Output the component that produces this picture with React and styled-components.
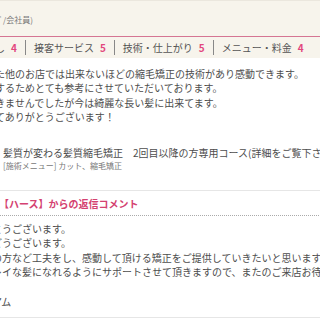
import styled, { createGlobalStyle } from 'styled-components';

const Global = createGlobalStyle`
  html, body {
    margin: 0;
    padding: 0;
    background: #fff;
    overflow: hidden;
  }
  body {
    font-family: "Noto Sans CJK JP", "Noto Sans", sans-serif;
    color: #4d4d4d;
  }
`;

const Page = styled.div`
  width: 340px;
  margin-left: -5px;
  overflow: hidden;
`;

const Head = styled.div`
  background: #f7f4ec;
  border-top: 1px solid #ebe7de;
`;

const Reviewer = styled.div`
  height: 34px;
  display: flex;
  align-items: center;
  padding-top: 1px;
  font-size: 8px;
  color: #777;
`;

const Ratings = styled.div`
  border-top: 1px solid #d57593;
  height: 21px;
  display: flex;
  align-items: center;
  font-size: 10px;
  color: #555;
  white-space: nowrap;
`;

const Item = styled.span`
  display: flex;
  align-items: center;
`;

const Score = styled.b`
  color: #e2477d;
  margin-left: 6px;
  font-size: 10px;
`;

const Sep = styled.span`
  width: 1px;
  height: 15px;
  background: #888;
  margin: 0 8px 0 8px;
`;

const Body = styled.div`
  padding-top: 9px;
  font-size: 10px;
  line-height: 14.4px;
  white-space: nowrap;
`;

const Para = styled.p`
  margin: 0;
`;

const Menu = styled.div`
  margin-top: 21px;
  padding-left: 8px;
  padding-bottom: 19px;
  border-bottom: 1px solid #e6e6e6;
`;

const MenuTitle = styled.div`
  font-size: 10px;
  line-height: 14px;
`;

const MenuSub = styled.div`
  font-size: 8px;
  line-height: 11px;
  color: #777;
`;

const ReplyHead = styled.div`
  padding-top: 4px;
  height: 20px;
  display: flex;
  align-items: center;
  font-size: 10px;
  font-weight: bold;
  color: #d44271;
  border-bottom: 1px dotted #aaa;
  padding-left: 4px;
`;

const Reply = styled.div`
  margin-left: -3px;
  padding-top: 6px;
  padding-bottom: 8px;
  border-bottom: 1px solid #e6e6e6;
  font-size: 10px;
  line-height: 14.6px;
`;

export default function App() {
  return (
    <>
      <Global />
      <Page>
        <Head>
          <Reviewer>ﾀﾞ/会社員)</Reviewer>
          <Ratings>
            <Item>し<Score>4</Score></Item>
            <Sep />
            <Item>接客サービス<Score>5</Score></Item>
            <Sep />
            <Item>技術・仕上がり<Score>5</Score></Item>
            <Sep />
            <Item>メニュー・料金<Score>4</Score></Item>
          </Ratings>
        </Head>
        <Body>
          <Para>た他のお店では出来ないほどの縮毛矯正の技術があり感動できます。</Para>
          <Para>するためとても参考にさせていただいております。</Para>
          <Para>きませんでしたが今は綺麗な長い髪に出来てます。</Para>
          <Para>てありがとうございます！</Para>
          <Menu>
            <MenuTitle>髪質が変わる髪質縮毛矯正　2回目以降の方専用コース(詳細をご覧下さい)</MenuTitle>
            <MenuSub>[施術メニュー] カット、縮毛矯正</MenuSub>
          </Menu>
          <ReplyHead>【ハース】からの返信コメント</ReplyHead>
          <Reply>
            <Para>とうございます。</Para>
            <Para>どうございます。</Para>
            <Para>の方など工夫をし、感動して頂ける矯正をご提供していきたいと思います。</Para>
            <Para>レイな髪になれるようにサポートさせて頂きますので、またのご来店お待ちしております。</Para>
            <Para>&nbsp;</Para>
            <Para>アム</Para>
          </Reply>
        </Body>
      </Page>
    </>
  );
}
